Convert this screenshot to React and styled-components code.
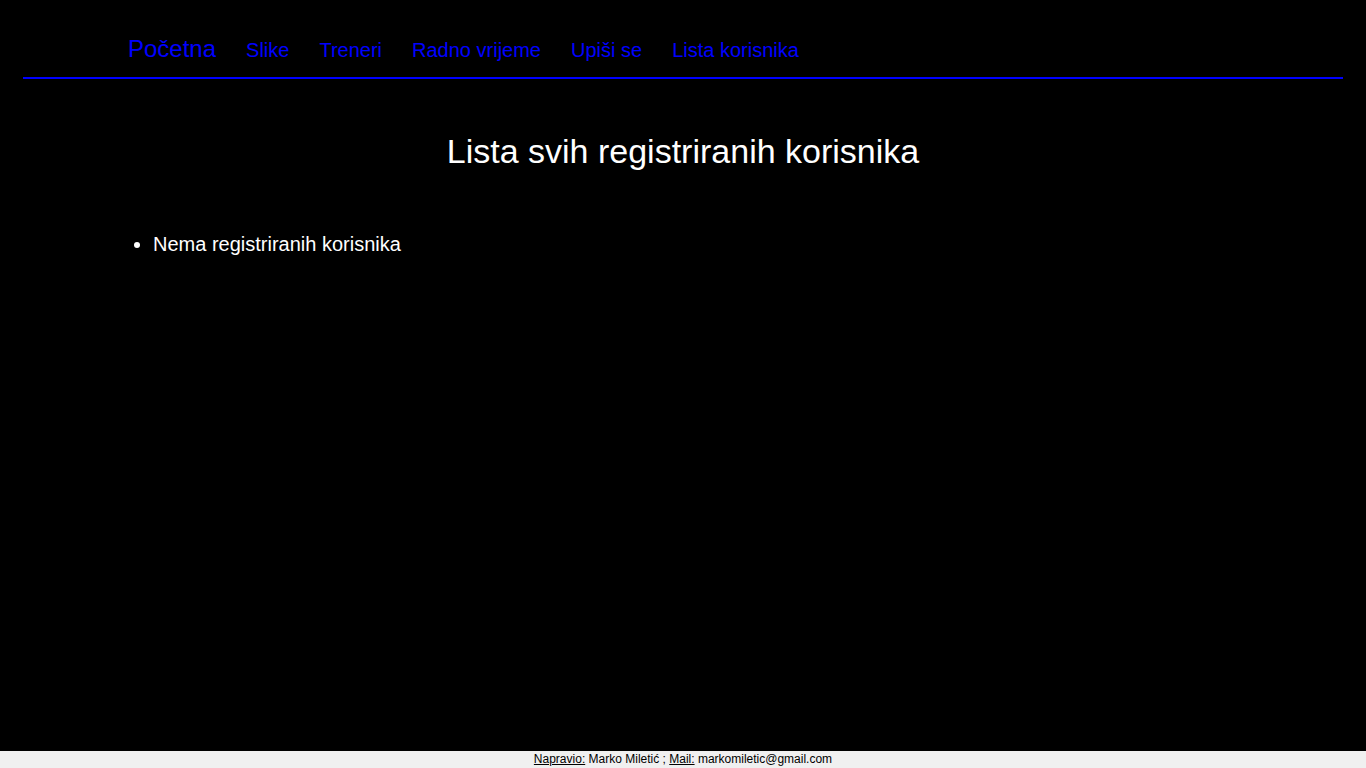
import styled, { createGlobalStyle } from 'styled-components';

const GlobalStyle = createGlobalStyle`
  html, body {
    margin: 0;
    padding: 0;
    background-color: #000;
    font-family: "Liberation Sans", Arial, sans-serif;
  }
`;

const links = ['Slike', 'Treneri', 'Radno vrijeme', 'Upiši se', 'Lista korisnika'];

export default function App() {
  return (
    <>
      <GlobalStyle />
      <Page>
        <Header>
          <Nav>
            <NavLink href="#" $home>Početna</NavLink>
            {links.map((l) => (
              <NavLink key={l} href="#">{l}</NavLink>
            ))}
          </Nav>
        </Header>
        <Main>
          <Title>Lista svih registriranih korisnika</Title>
          <UserList>
            <UserItem>Nema registriranih korisnika</UserItem>
          </UserList>
        </Main>
      </Page>
      <Footer>
        <Label>Napravio:</Label> Marko Miletić ; <Label>Mail:</Label> markomiletic@gmail.com
      </Footer>
    </>
  );
}

const Page = styled.div`
  min-height: 751px;
  padding: 0 23px;
  background-color: #000;
`;

const Header = styled.div`
  border-bottom: 2px solid #0000ff;
  padding: 36px 0 14px 105px;
`;

const Nav = styled.nav`
  display: flex;
  align-items: baseline;
  gap: 30px;
`;

const NavLink = styled.a`
  color: #0000ff;
  text-decoration: none;
  font-size: ${({ $home }) => ($home ? '24px' : '20px')};
  line-height: 26px;
`;

const Main = styled.div`
  padding: 0 0 0 90px;
`;

const Title = styled.h1`
  margin: 50px 0 0 -90px;
  text-align: center;
  color: #fff;
  font-size: 34px;
  font-weight: normal;
  line-height: 44px;
`;

const UserList = styled.ul`
  margin: 59px 0 0;
  padding-left: 40px;
  color: #fff;
`;

const UserItem = styled.li`
  font-size: 20px;
  line-height: 24px;
`;

const Footer = styled.footer`
  position: fixed;
  left: 0;
  right: 0;
  bottom: 0;
  height: 17px;
  background-color: #f0f0f0;
  color: #000;
  font-size: 12px;
  line-height: 17px;
  text-align: center;
`;

const Label = styled.span`
  text-decoration: underline;
`;
